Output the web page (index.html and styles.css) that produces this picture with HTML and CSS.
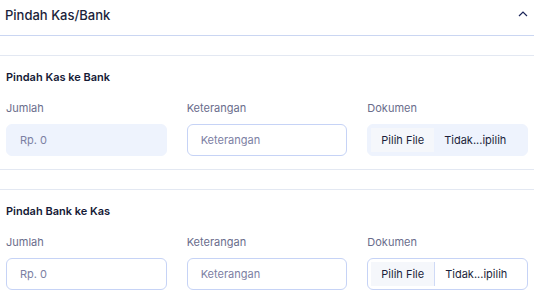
FILE: index.html
```html
<!DOCTYPE html>
<html lang="id">
<head>
  <meta charset="UTF-8">
  <title>Pindah Kas/Bank</title>
  <link rel="stylesheet" href="styles.css">
</head>
<body>
  <div class="accordion">
    <div class="accordion-header">
      <span class="accordion-title">Pindah Kas/Bank</span>
      <svg class="chevron" width="10" height="7" viewBox="0 0 10 7">
        <polyline points="1,6 5,2 9,6" fill="none" stroke="#1b2559" stroke-width="1.2"/>
      </svg>
    </div>

    <div class="accordion-body">
      <div class="section">
        <div class="section-title">Pindah Kas ke Bank</div>
        <div class="form-row">
          <div class="field">
            <label>Jumlah</label>
            <div class="input filled"><span class="placeholder">Rp. 0</span></div>
          </div>
          <div class="field">
            <label>Keterangan</label>
            <div class="input"><span class="placeholder">Keterangan</span></div>
          </div>
          <div class="field">
            <label>Dokumen</label>
            <div class="file-input filled">
              <span class="file-btn">Pilih File</span>
              <span class="file-name">Tidak...ipilih</span>
            </div>
          </div>
        </div>
      </div>

      <div class="section">
        <div class="section-title">Pindah Bank ke Kas</div>
        <div class="form-row">
          <div class="field">
            <label>Jumlah</label>
            <div class="input"><span class="placeholder">Rp. 0</span></div>
          </div>
          <div class="field">
            <label>Keterangan</label>
            <div class="input"><span class="placeholder">Keterangan</span></div>
          </div>
          <div class="field">
            <label>Dokumen</label>
            <div class="file-input">
              <span class="file-btn bordered">Pilih File</span>
              <span class="file-name">Tidak...ipilih</span>
            </div>
          </div>
        </div>
      </div>
    </div>
  </div>
</body>
</html>
```

FILE: styles.css
```css
body { margin: 0; font-family: Inter, "Noto Sans", sans-serif; background: #fff; color: #1b1f3b; }
.accordion-header { height: 29px; padding: 0 6px 6px 5px; display: flex; align-items: center; justify-content: space-between; border-bottom: 1px solid #cad6f2; }
.accordion-title { font-size: 13px; font-weight: 500; color: #1b1f3b; }
.chevron { margin-top: -3px; }
.accordion-body { padding-top: 19px; display: flex; flex-direction: column; gap: 19px; }
.section { border-top: 1px solid #e3e8f2; border-bottom: 1px solid #e3e8f2; padding: 13px 6px 13px 6px; }
.section-title { font-size: 11px; font-weight: 600; line-height: 16px; color: #151a36; }
.form-row { display: grid; grid-template-columns: repeat(3, 1fr); gap: 20px; margin-top: 15px; }
.field label { display: block; font-size: 11px; line-height: 16px; color: #6a6d8c; margin-bottom: 8px; }
.input { height: 32px; box-sizing: border-box; border: 1px solid #c6d3f6; border-radius: 6px; display: flex; align-items: center; padding: 0 13px; font-size: 11px; }
.input.filled { background: #eef3fd; border-color: #eef3fd; }
.placeholder { color: #7c80a3; }
.file-input { height: 32px; box-sizing: border-box; border: 1px solid #c6d3f6; border-radius: 6px; display: flex; align-items: center; padding: 3px; font-size: 11px; color: #1b1f3b; }
.file-input.filled { background: #eef3fd; border-color: #eef3fd; }
.file-btn { align-self: stretch; display: flex; align-items: center; padding: 0 10px; background: #f5f7fb; }
.file-btn.bordered { border-right: 1px solid #cfdaf6; }
.file-name { padding-left: 10px; }
```
